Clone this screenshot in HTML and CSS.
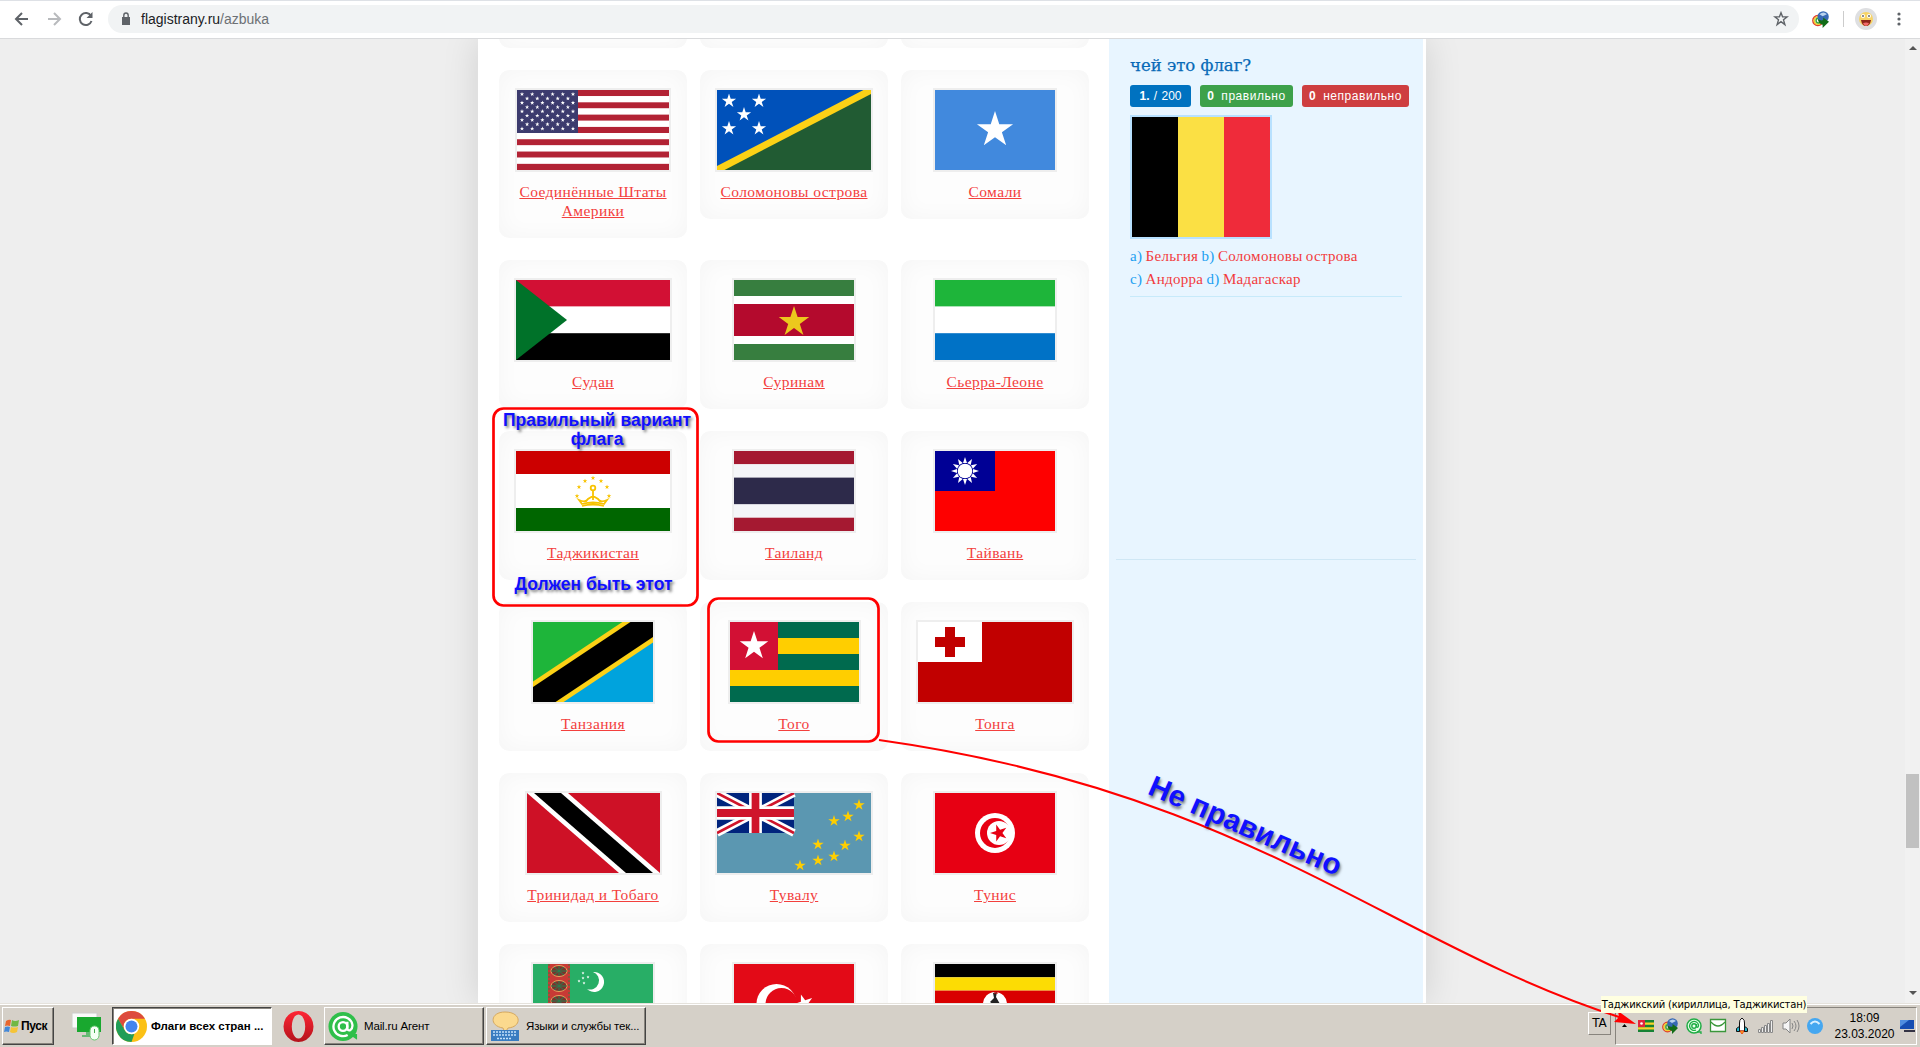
FILE: index.html
```html
<!DOCTYPE html>
<html lang="ru"><head><meta charset="utf-8"><title>Флаги всех стран</title><link rel="stylesheet" href="styles.css"></head><body>
<svg width="0" height="0" class="defs"><defs>
<symbol id="star" viewBox="-1 -1 2 2"><path d="M0-1 .225-.309H.951L.363.118.588.809 0 .382-.588.809-.363.118-.951-.309H-.225Z"/></symbol>
<symbol id="idm" viewBox="0 0 16 16"><circle cx="5.500" cy="9" r="4.700" fill="none" stroke="#e0402e" stroke-width="1.400"/><circle cx="5.500" cy="9" r="3.400" fill="none" stroke="#f3d02d" stroke-width="1.500"/><circle cx="6" cy="9" r="2.200" fill="none" stroke="#3da544" stroke-width="1.400"/><circle cx="10.500" cy="5.500" r="5.300" fill="#3769b4"/><path d="M7 3q4-3 7 0l-4 2Z" fill="#b8d2ee"/><path d="M5.500 7.500q3 2 5 1V6l5.500 4-6 6v-3q-4-1-4.500-5.500Z" fill="#126c17"/></symbol>
<symbol id="at" viewBox="0 0 32 32"><circle cx="16" cy="16" r="15.500" fill="#2fbf4a"/><path d="M22 24h9v6Z" fill="#2fbf4a"/><g fill="none" stroke="#fff" stroke-width="2.500"><circle cx="16" cy="16" r="4.600"/><path d="M20.600 11v6q0 4 3 3 3-2 2.400-6A10.200 10.200 0 1 0 21 25"/></g></symbol>
</defs></svg>
<header class="toolbar">
<svg class="nav" width="100" height="28" fill="none" stroke="#5f6368" stroke-width="2"><path d="M28 14H16M22 8l-6 6 6 6"/><path stroke="#b8babd" d="M48 14h12M54 8l6 6-6 6"/><path d="M91 11a6 6 0 1 0 .5 5"/><path d="M92.500 7v6h-6Z" fill="#5f6368" stroke="none"/></svg>
<div class="omnibox"><svg width="10" height="14"><path d="M1 5h8v8H1Z" fill="#5f6368"/><path d="M2.800 6V3.500a2.200 2.500 0 0 1 4.400 0V6" fill="none" stroke="#5f6368" stroke-width="1.400"/></svg><span class="url">flagistrany.ru<i>/azbuka</i></span>
<svg class="bookmark" width="16" height="16" viewBox="-1.150 -1.150 2.300 2.300"><path d="M0-.9 .225-.309H.9L.363.118.56.809 0 .382-.56.809-.363.118-.9-.309H-.225Z" fill="none" stroke="#5f6368" stroke-width=".2"/></svg></div>
<div class="extensions"><svg width="17" height="17"><use href="#idm"/></svg><i class="divider"></i>
<svg width="22" height="22"><circle cx="11" cy="11" r="11" fill="#dedfe1"/><circle cx="11" cy="11" r="7" fill="#f7d466"/><path d="M6 12h10q-1 6-5 6t-5-6Z" fill="#8c2319"/><path d="M8 15q3-1 6 0-1 3-3 3t-3-3Z" fill="#f26a6a"/><circle cx="8" cy="8" r="2" fill="#fff"/><circle cx="14" cy="8" r="2" fill="#fff"/><circle cx="8" cy="8" r=".8"/><circle cx="14" cy="8" r=".8"/></svg>
<svg class="menu" width="4" height="14" fill="#5f6368"><circle cx="2" cy="2" r="1.600"/><circle cx="2" cy="7" r="1.600"/><circle cx="2" cy="12" r="1.600"/></svg></div>
</header>
<main class="viewport">
<div class="page">
<section class="flags" id="flags"></section>
<aside class="quiz"><div class="quiz-body"><h2>чей это флаг?</h2>
<div class="badges"><span class="total"><b>1.</b> / 200</span><span class="right"><b>0</b> правильно</span><span class="wrong"><b>0</b> неправильно</span></div>
<div class="belgium"><i></i><i></i><i></i></div>
<p><i>a)</i> Бельгия <i>b)</i> Соломоновы острова</p><p><i>c)</i> Андорра <i>d)</i> Мадагаскар</p></div></aside>
</div>
<div class="scrollbar"><i class="up"></i><i class="thumb"></i><i class="down"></i></div>
</main>
<footer class="taskbar">
<div class="button start"><svg width="16" height="16"><path d="M2 3q3-2 5-1l-1 6q-3-1-5 0Z" fill="#e8662d"/><path d="M8 2q3 2 7 0l-1 6q-4 1-7 0Z" fill="#70b843"/><path d="M1 9q3-1 5 0l-1 5q-3-1-5 0Z" fill="#4388d8"/><path d="M7 9q3 1 7 0l-1 5q-4 2-7 0Z" fill="#f5c437"/></svg><b>Пуск</b></div>
<svg class="desk" width="30" height="30"><path d="M0 1h25v15H0Z" fill="#fafafa" stroke="#ccc"/><path d="M5 5h24v15H5Z" fill="#19a82f"/><path d="M14 20h4v3h-4ZM10 23h10v2H10Z" fill="#67b975"/><rect x="18" y="14" width="9" height="14" rx="4.500" fill="#f4fff4" stroke="#65c86f"/><path d="M22.500 17v4" stroke="#43a94c"/></svg>
<div class="button active"><svg width="31" height="31" viewBox="0 0 32 32"><circle cx="16" cy="16" r="16" fill="#fbc116"/><path d="M2.140 8A16 16 0 0 1 29.860 8H16a8 8 0 0 0-7 12Z" fill="#dd4b3e"/><path d="M2.140 8l7 12A8 8 0 0 0 19 23.500L16 32A16 16 0 0 1 2.140 8Z" fill="#209d58"/><circle cx="16" cy="16" r="8" fill="#fff"/><circle cx="16" cy="16" r="6.200" fill="#4385ef"/></svg><b>Флаги всех стран ...</b></div>
<svg class="opera" width="31" height="31"><defs><linearGradient id="op" x2="0" y2="1"><stop stop-color="#ff2634"/><stop offset="1" stop-color="#b3131b"/></linearGradient></defs><path fill-rule="evenodd" fill="url(#op)" d="M15.500 0a15 15.500 0 1 0 .01 0ZM15.500 3.500a6.700 12 0 1 1-.01 0Z"/></svg>
<div class="button mail"><svg width="30" height="31"><use href="#at"/></svg><span>Mail.ru Агент</span></div>
<div class="button lang"><svg width="30" height="31"><path d="M15 1c17 0 17 15 3 16l-3 5-2-5C-1 15 0 1 15 1Z" fill="#fbd98e" stroke="#d6a95f"/><path d="M1 19h28v11H1Z" fill="#397cc0"/><path d="M3 21h24M3 24h24M7 27.500h15" stroke="#c4e1fa" stroke-width="1.500" stroke-dasharray="2 1"/></svg><span>Языки и службы тек...</span></div>
<div class="ta">TA</div>
<div class="tray"><svg width="215" height="28">
<path d="M6 15l2.500-3 2.500 3Z"/>
<g transform="translate(22 8)"><path fill="#168235" d="M0 0h16v12H0Z"/><path fill="#f8d22b" d="M0 2.400h16v2.400H0ZM0 7.200h16v2.400H0Z"/><path fill="#e2253d" d="M0 0h7v7H0Z"/><circle cx="3.500" cy="3.500" r="1.300" fill="#fff"/></g>
<use href="#idm" x="46" y="6" width="16" height="16"/>
<g transform="translate(70 6)" fill="none" stroke="#20ad45"><circle cx="8" cy="8" r="7" fill="#e8ffeb" stroke-width="1.500"/><circle cx="8" cy="8" r="2.200" stroke-width="1.400"/><path d="M10.500 6v3q2 1 2-2A4.500 4.500 0 1 0 10 12M11 14h4v2" stroke-width="1.300"/></g>
<path d="M94.500 7.500h15v12h-15Z" fill="#fff" stroke="#3a963a" stroke-width="1.300"/><path d="M95 10q7 8 14 0" fill="none" stroke="#3a963a" stroke-width="1.300"/>
<g transform="translate(118 6)"><path d="M6 8l-3.500 2.500v3H6ZM10 8l3.500 2.500v3H10Z" fill="#23b8d0" stroke="#111"/><path d="M8 0Q5 2 5.500 5v8h5V5Q11 2 8 0Z" fill="#fff" stroke="#111"/><path d="M6 13h4l-2 3Z" fill="#ffd21c" stroke="#f04415"/></g>
<g fill="#eee" stroke="#888"><path d="M142.500 17.500h2v3h-2ZM145.500 15.500h2v5h-2ZM148.500 13.500h2v7h-2ZM151.500 11.500h2v9h-2ZM154.500 8.500h2v12h-2Z"/></g>
<g fill="#f5f5f5" stroke="#858585"><path d="M167 11h3l4-4v14l-4-4h-3Z"/><path d="M176 11q2 3 0 6M178 9q4 5 0 10M181 8q4 6 0 12" fill="none"/></g>
<circle cx="199" cy="14" r="8" fill="#45a7f0"/><path d="M194.500 12q4.500-5 9 0" fill="none" stroke="#d8efff" stroke-width="2"/>
</svg><div class="clock"><span>18:09</span><span>23.03.2020</span></div><svg width="17" height="16"><path d="M1 2h14v9H1Z" fill="#164db2"/><path d="M1 2h9L1 9Z" fill="#4f8de0"/><path d="M5 12h11v2H5Z" fill="#334"/></svg></div>
</footer>
<svg class="marks" width="1920" height="1047"><g fill="none" stroke="red" stroke-width="2.700"><rect x="493.500" y="408.500" width="204" height="197" rx="10"/><rect x="708.500" y="598.500" width="170" height="143" rx="10"/><path stroke-width="2" d="M879 740C1250 792 1390 944 1622 1018"/></g><path d="M1636 1024l-22-2 5-5-1-6Z" fill="red"/></svg>
<div class="note top">Правильный вариант<br>флага</div><div class="note bottom">Должен быть этот</div><div class="note wrong-note">Не правильно</div>
<div class="tooltip">Таджикский (кириллица, Таджикистан)</div>
<script src="flags.js"></script>
</body></html>
```
FILE: styles.css
```css
*{box-sizing:border-box}
body{margin:0;width:1920px;height:1047px;overflow:hidden;position:relative;display:flex;flex-direction:column;background:#eee;font-family:"Liberation Sans",Arial,sans-serif}
i{font-style:normal}
svg{display:block;flex:none}
.defs{position:absolute}
.toolbar{height:39px;flex:none;display:flex;align-items:flex-start;background:linear-gradient(90deg,transparent 1667px,#fff 1667px 1742px,transparent 1742px) 0 0/100% 1px no-repeat,#fff;border-bottom:1px solid #d9dadc;padding-top:5px;box-shadow:inset 0 1px #dee1e6}
.nav{margin-right:8px}
.omnibox{width:1691px;height:28px;border-radius:14px;background:#f1f3f4;display:flex;align-items:center;padding:0 10px 0 13px}
.url{margin-left:10px;font-size:14px;color:#202124}
.url i{color:#6d7175}
.bookmark{margin-left:auto}
.extensions{height:28px;display:flex;align-items:center}
.extensions>svg:first-child{margin-left:13px}
.divider{width:1px;height:16px;background:#ccc;margin:0 11px 0 14px}
.menu{margin-left:20px}
.viewport{height:964px;flex:none;display:flex;overflow:hidden;position:relative}
.page{width:948px;height:964px;margin-left:478px;background:#fff;display:flex;box-shadow:0 0 34px #00000020;padding-right:3px;justify-content:space-between}
.flags{width:611px;padding-left:21px;display:grid;grid-template-columns:repeat(3,188px);column-gap:13px;row-gap:22px;align-content:start;align-items:start;margin-top:-140px}
.card{height:149px;padding:18px 0 0;border-radius:10px;box-shadow:inset 0 0 24px #00000009;background:#fdfdfd;display:flex;flex-direction:column;align-items:center}
.card.wide{height:168px}
.flag{border:2px solid #eee;height:84px}
.card a{font:15.500px/19px "Liberation Serif","Times New Roman",serif;margin-top:10px;text-align:center;text-decoration:underline;color:#f3403d;letter-spacing:.4px}
.quiz{width:314px;background:#e8f5ff;padding:15px 7px 0}
.quiz-body{height:506px;border-bottom:1px solid #cfe7f5;padding:0 14px}
.quiz h2{margin:0;font:500 16.500px/24px "DejaVu Serif",serif;color:#0769b7;-webkit-text-stroke:.25px #0769b7}
.badges{display:flex;gap:9px;margin:7px -8px 8px 0}
.badges span{height:22px;border-radius:3px;background:#0072c0;color:#fff;font:12px/22px "Liberation Sans",sans-serif;letter-spacing:.55px;white-space:nowrap;text-align:center;word-spacing:3px}
.badges .total{width:61px;letter-spacing:0;word-spacing:1px}.badges .right{width:93px;background:#3da14a}.badges .wrong{width:107px;background:#ce3e40}
.belgium{width:142px;height:124px;border:2px solid #b8e1ff;display:flex}
.belgium i{flex:1;background:#000}.belgium i+i{background:#fbe044}.belgium i+i+i{background:#ef2b3a}
.quiz p{margin:0;font:15px/23px "Liberation Serif",serif;color:#f23b3d;white-space:nowrap;letter-spacing:.3px;word-spacing:-.8px}
.quiz p i{color:#1b9ff1}
.belgium+p{margin-top:6px}
.quiz p:last-child{height:29px;width:272px;border-bottom:1px solid #c7eafa}
.scrollbar{width:15px;margin-left:auto;display:flex;flex-direction:column;align-items:center;background:#f1f1f1}
.scrollbar i{border:4px solid transparent}
.scrollbar .up{border-bottom-color:#555;margin-top:3px}
.scrollbar .thumb{width:13px;height:74px;background:#c1c1c1;border:0;margin-top:724px}
.scrollbar .down{border-top-color:#555;margin-top:auto;margin-bottom:4px}
.taskbar{height:44px;flex:none;background:#d5d0c8;border-top:1px solid #e5e2dc;box-shadow:inset 0 1px #fff;display:flex;padding:3px 1px 2px 2px;font-size:12px}
.button{height:38px;border:1px solid;border-color:#fff #444 #444 #fff;box-shadow:inset -1px -1px #88847d;display:flex;align-items:center;gap:6px;padding:0 3px;white-space:nowrap;overflow:hidden}
.start{width:52px;gap:1px;padding:0 0 0 1px}
.start b{font-size:12px;letter-spacing:-.4px}
.desk{margin:5px 9px 0 18px}
.active{width:160px;margin-left:1px;background:#fff;border-color:#444 #fff #fff #444;box-shadow:inset 1px 1px #88847d;font-size:11.500px;gap:4px}
.opera{margin:4px 10px 0 11px}
.mail,.lang{width:160px;font-size:11.500px;letter-spacing:-.15px}
.lang{margin-left:2px}
.ta{width:23px;height:23px;border:1px solid;border-color:#fff #88847d #88847d #fff;margin:5px 4px 0 942px;text-align:center;font:12px/20px "DejaVu Sans",sans-serif}
.tray{width:302px;height:38px;border:1px solid;border-color:#88847d #fff #fff #88847d;display:flex;align-items:center;padding-bottom:1px}
.tray>svg:last-child{margin-left:4px}
.clock{width:62px;margin-left:3px;display:flex;flex-direction:column;align-items:center;font:12px/16px "Liberation Sans",sans-serif}
.marks,.note,.tooltip{position:absolute;left:0;top:0}
.note{color:#1010ff;font:bold 17.500px/19px "Liberation Sans",Arial,sans-serif;text-align:center;text-shadow:2px 2px 3px #0008;white-space:nowrap}
.note.top{left:497px;top:411px;width:200px}
.note.bottom{left:497px;top:575px;width:193px}
.note.wrong-note{left:1142px;top:808px;width:204px;height:34px;font-size:29.500px;line-height:34px;transform:rotate(23.500deg)}
.tooltip{left:1601px;top:996px;width:206px;height:17px;background:#ffffe1;font:10px/17px "DejaVu Sans",sans-serif;text-align:center;white-space:nowrap;letter-spacing:-.2px}
```
FILE: flags.js
```js
const rect = (x, y, w, h, fill) => `<rect x="${x}" y="${y}" width="${w}" height="${h}" fill="${fill}"/>`;
const star = (x, y, r, fill = '#fff', extra = '') => `<use href="#star" x="${x - r}" y="${y - r}" width="${2 * r}" height="${2 * r}" fill="${fill}" ${extra}/>`;
const stripes = (w, list) => {
  let y = 0;
  return list.map(([h, c]) => { const s = rect(0, y, w, h, c); y += h; return s; }).join('');
};
const usa = () => {
  let s = stripes(152, Array.from({ length: 13 }, (_, i) => [80 / 13, i % 2 ? '#fff' : '#b22234'])) + rect(0, 0, 61, 43, '#3c3b6e');
  for (let r = 0; r < 9; r++) for (let c = 0; c < (r % 2 ? 5 : 6); c++) s += star(5 + c * 10.2 + (r % 2 ? 5.1 : 0), 4.2 + r * 4.3, 2.3);
  return s;
};
const taiwan = () => {
  let rays = '';
  for (let i = 0; i < 12; i++) rays += `<path d="M-2-8 0-14 2-8Z" transform="rotate(${i * 30})"/>`;
  return rect(0, 0, 120, 80, '#fe0000') + rect(0, 0, 60, 40, '#000095') + `<g transform="translate(30 20)" fill="#fff"><circle r="7.3"/>${rays}</g>`;
};
const tajik = () => stripes(154, [[23, '#c00'], [34, '#fff'], [23, '#060']]) +
  [[61, 45], [63, 36], [69, 30], [77, 27], [85, 30], [91, 36], [93, 45]].map(p => star(p[0], p[1], 2.5, '#f8c300')).join('') +
  `<g fill="none" stroke="#f8c300" stroke-width="1.8"><circle cx="77" cy="37" r="2.3"/><path d="M77 39v10M63 49q7 3 9-1l5-3 5 3q2 4 9 1l-3 4q-11-3-22 0ZM66 55q11-3 22 0"/></g>`;
const uk = `<g transform="scale(1.283 1.333)"><rect width="60" height="30" fill="#00247d"/><path d="M0 0 60 30M60 0 0 30" stroke="#fff" stroke-width="6"/><path d="M0 0 60 30M60 0 0 30" stroke="#cf142b" stroke-width="2"/><path d="M30 0v30M0 15h60" stroke="#fff" stroke-width="10"/><path d="M30 0v30M0 15h60" stroke="#cf142b" stroke-width="6"/></g>`;
const tuvalu = rect(0, 0, 154, 80, '#5b97b1') + uk +
  [[142, 12], [131, 23.5], [117, 28], [142, 43.5], [101, 51.5], [128, 52.5], [117, 63.5], [101, 67.5], [83, 72.5]].map(p => star(p[0], p[1], 6, '#ffce00')).join('');
const turkmen = rect(0, 0, 120, 80, '#28ae66') + rect(15, 0, 22, 80, '#c83a35') +
  [7, 22, 37].map(y => `<g transform="translate(26 ${y})"><ellipse rx="8" ry="5.5" fill="#79332d" stroke="#e7a25c"/><path d="M-8 0H8M0-5V5M-5-4 5 4M5-4-5 4" stroke="#268150"/></g>`).join('') +
  `<path d="M16 0v80M36 0v80" stroke="#387a45" stroke-dasharray="2"/><path d="M60 8A10 10 0 1 1 54 25 9 9 0 0 0 60 8Z" fill="#fff"/>` + [[50, 9], [55, 13], [50, 14], [46, 17], [51, 19]].map(p => star(p[0], p[1], 1.7)).join('');
const suriname = stripes(120, [[16, '#377e3f'], [8, '#fff'], [32, '#b40a2d'], [8, '#fff'], [16, '#377e3f']]) + star(60, 42, 16, '#ecc81d');
// [name, flag width, artwork]
const flags = [
  ['', 120, ''], ['', 120, ''], ['', 120, ''],
  ['Соединённые Штаты<br>Америки', 152, usa()],
  ['Соломоновы острова', 154, rect(0, 0, 154, 80, '#0051ba') + '<path d="M154 0v80H0Z" fill="#215b33"/><path d="M-15.4 88 169.4-8" stroke="#fcd116" stroke-width="7"/>' + [[12, 11], [42, 11], [27, 24.5], [12, 38.5], [42, 38.5]].map(p => star(p[0], p[1], 7.5)).join('')],
  ['Сомали', 120, rect(0, 0, 120, 80, '#4189dd') + star(60, 40, 19)],
  ['Судан', 154, stripes(154, [[26.6, '#d21034'], [26.6, '#fff'], [26.8, '#000']]) + '<path d="M0 0 51 40 0 80Z" fill="#007229"/>'],
  ['Суринам', 120, suriname],
  ['Сьерра-Леоне', 120, stripes(120, [[26.6, '#1eb53a'], [26.6, '#fff'], [26.8, '#0072c6']])],
  ['Таджикистан', 154, tajik()],
  ['Таиланд', 120, stripes(120, [[13.3, '#a51931'], [13.3, '#f4f5f8'], [26.8, '#2d2a4a'], [13.3, '#f4f5f8'], [13.3, '#a51931']])],
  ['Тайвань', 120, taiwan()],
  ['Танзания', 120, rect(0, 0, 120, 80, '#1eb53a') + '<path d="M0 80H120V0Z" fill="#00a3dd"/><path d="M-12 88 132-8" stroke="#fcd116" stroke-width="34"/><path d="M-12 88 132-8" stroke="#000" stroke-width="25"/>'],
  ['Того', 129, stripes(129, [[16, '#006a4e'], [16, '#ffce00'], [16, '#006a4e'], [16, '#ffce00'], [16, '#006a4e']]) + rect(0, 0, 48, 48, '#d21034') + star(24, 24, 15)],
  ['Тонга', 154, rect(0, 0, 154, 80, '#c10000') + rect(0, 0, 64, 40, '#fff') + '<path d="M27 5h10v10h10v10H37v10H27V25H17V15h10Z" fill="#c10000"/>'],
  ['Тринидад и Тобаго', 133, rect(0, 0, 133, 80, '#ce1126') + '<path d="M0 0H41L133 80H92Z" fill="#fff"/><path d="M7 0H34L126 80H99Z"/>'],
  ['Тувалу', 154, tuvalu],
  ['Тунис', 120, rect(0, 0, 120, 80, '#e70013') + '<circle cx="60" cy="40" r="20" fill="#fff"/><circle cx="60" cy="40" r="15" fill="#e70013"/><circle cx="64" cy="40" r="12" fill="#fff"/>' + star(64, 40, 9, '#e70013', 'transform="rotate(-90 64 40)"')],
  ['', 120, turkmen],
  ['', 120, rect(0, 0, 120, 80, '#e30a17') + '<circle cx="42.5" cy="40" r="20" fill="#fff"/><circle cx="47.5" cy="40" r="16" fill="#e30a17"/>' + star(70, 40, 10, '#fff', 'transform="rotate(-90 70 40)"')],
  ['', 120, stripes(120, [[13.3, '#000'], [13.3, '#fcdc04'], [13.4, '#d90000'], [13.3, '#000'], [13.3, '#fcdc04'], [13.4, '#d90000']]) + '<circle cx="60" cy="40" r="12" fill="#fff"/><path d="M58 29l4-1-1 5 4 7-4 8h-4l2-7-4-3 4-4Z" fill="#222"/><path d="M59 29h4" stroke="#d90000"/>'],
];
document.getElementById('flags').innerHTML = flags.map(([name, w, art], i) =>
  `<article class="card${i === 3 ? ' wide' : ''}"><svg class="flag" width="${w + 4}" height="84" viewBox="0 0 ${w} 80">${art}</svg><a>${name}</a></article>`).join('');
```
